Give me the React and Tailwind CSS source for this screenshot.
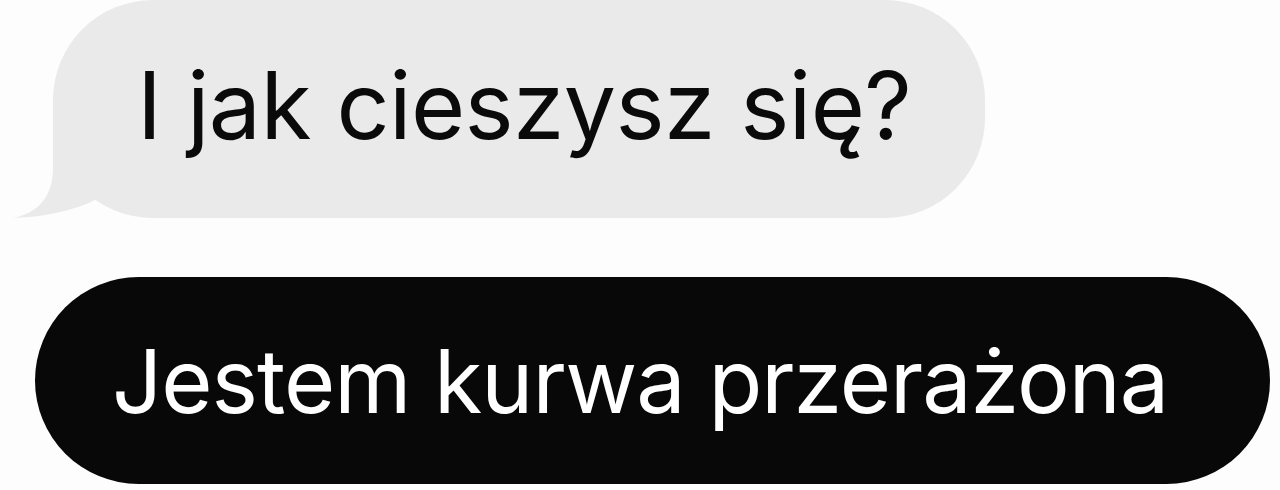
import React from "react";

export default function App() {
  return (
    <div
      className="w-[1280px] h-[490px] bg-[#fdfdfd] overflow-hidden flex flex-col"
      style={{ fontFamily: "Inter, 'Noto Sans', sans-serif" }}
    >
      <div className="relative ml-[53px] w-[932px] h-[218px]">
        {/* bubble tail, drawn in page coordinates */}
        <svg className="absolute left-[-53px] top-0" width="160" height="218" viewBox="0 0 160 218">
          <path
            d="M53 110 L53 168 C53 197 38 213 13 218 C46 217 76 210 97 199 L122 182 L122 110 Z"
            fill="#eaeaea"
          />
        </svg>
        <div className="relative h-full rounded-[100px] bg-[#eaeaea] flex items-center pl-[84px] pb-[8px]">
          <span className="text-[93px] leading-none text-[#0a0a0a] tracking-[-0.6px]">
            I jak cieszysz się?
          </span>
        </div>
      </div>
      <div className="ml-[35px] mt-[59px] w-[1235px] h-[207px] rounded-[104px] bg-[#080808] flex items-center pl-[77px]">
        <span className="text-[88px] leading-none text-white tracking-[-1px]">
          Jestem kurwa przerażona
        </span>
      </div>
    </div>
  );
}
